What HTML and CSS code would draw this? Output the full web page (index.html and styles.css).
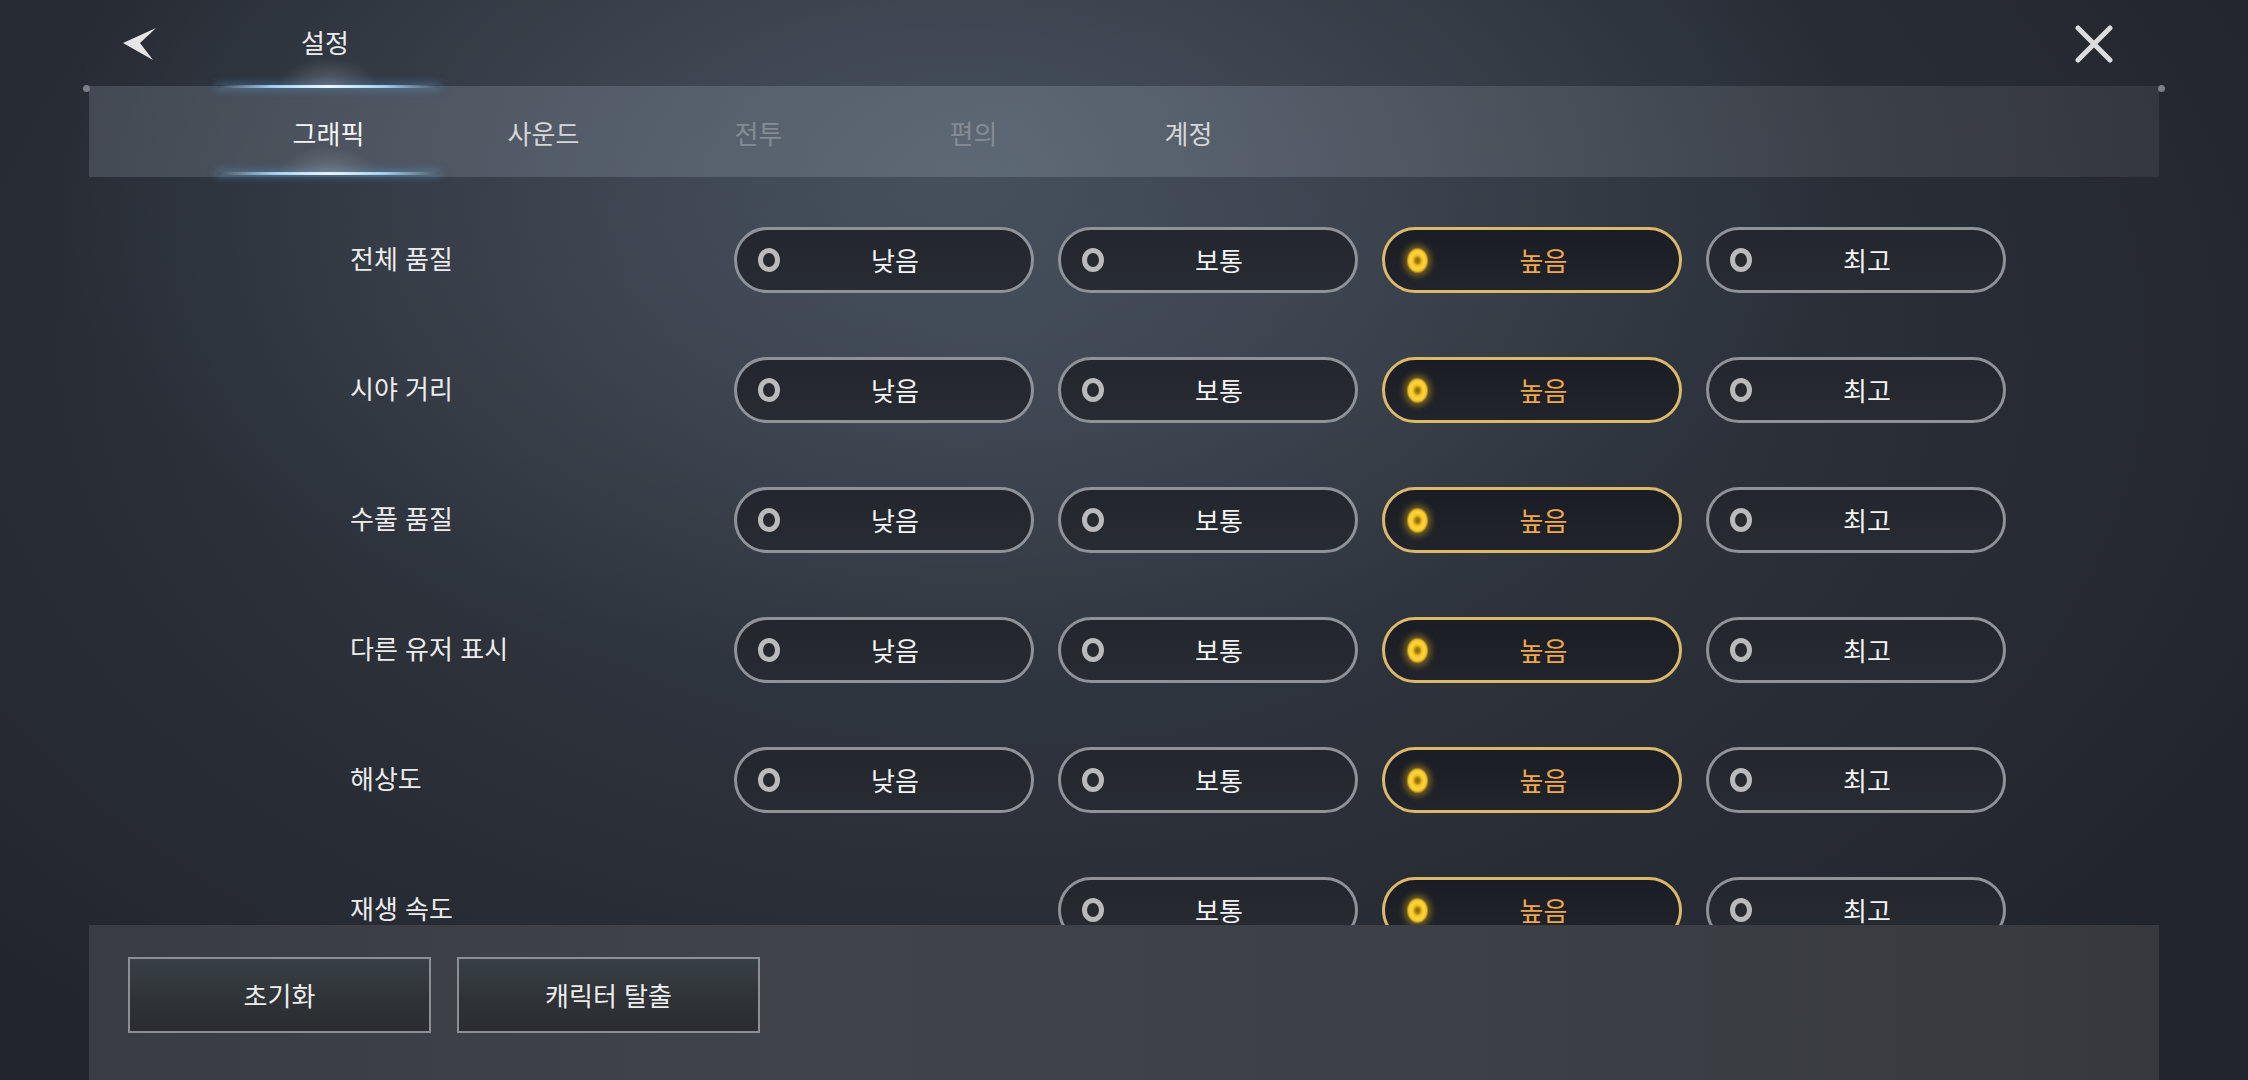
FILE: index.html
```html
<!DOCTYPE html>
<html lang="ko">
<head>
<meta charset="utf-8">
<title>설정</title>
<link rel="stylesheet" href="styles.css">
</head>
<body>
<div class="screen">
  <header class="header">
    <button class="back" aria-label="뒤로">
      <svg width="34" height="32" viewBox="0 0 34 32"><polygon points="0,15 33,0 17,15 30,32" fill="#e6e6e6"/></svg>
    </button>
    <h1 class="title">설정</h1>
    <div class="spacer"></div>
    <button class="close" aria-label="닫기">
      <svg width="38" height="38" viewBox="0 0 38 38"><path d="M3 3 L35 35 M35 3 L3 35" stroke="#dcdcdc" stroke-width="5" stroke-linecap="round"/></svg>
    </button>
  </header>

  <main class="panel">
    <nav class="tabs">
      <span class="dot dot-l"></span>
      <span class="dot dot-r"></span>
      <div class="tab active"><span>그래픽</span></div>
      <div class="tab"><span>사운드</span></div>
      <div class="tab dim"><span>전투</span></div>
      <div class="tab dim"><span>편의</span></div>
      <div class="tab"><span>계정</span></div>
    </nav>

    <section class="list">
      <div class="row">
        <div class="label">전체 품질</div>
        <div class="pill"><i class="radio"></i><span>낮음</span></div>
        <div class="pill"><i class="radio"></i><span>보통</span></div>
        <div class="pill on"><i class="radio"></i><span>높음</span></div>
        <div class="pill"><i class="radio"></i><span>최고</span></div>
      </div>
      <div class="row">
        <div class="label">시야 거리</div>
        <div class="pill"><i class="radio"></i><span>낮음</span></div>
        <div class="pill"><i class="radio"></i><span>보통</span></div>
        <div class="pill on"><i class="radio"></i><span>높음</span></div>
        <div class="pill"><i class="radio"></i><span>최고</span></div>
      </div>
      <div class="row">
        <div class="label">수풀 품질</div>
        <div class="pill"><i class="radio"></i><span>낮음</span></div>
        <div class="pill"><i class="radio"></i><span>보통</span></div>
        <div class="pill on"><i class="radio"></i><span>높음</span></div>
        <div class="pill"><i class="radio"></i><span>최고</span></div>
      </div>
      <div class="row">
        <div class="label">다른 유저 표시</div>
        <div class="pill"><i class="radio"></i><span>낮음</span></div>
        <div class="pill"><i class="radio"></i><span>보통</span></div>
        <div class="pill on"><i class="radio"></i><span>높음</span></div>
        <div class="pill"><i class="radio"></i><span>최고</span></div>
      </div>
      <div class="row">
        <div class="label">해상도</div>
        <div class="pill"><i class="radio"></i><span>낮음</span></div>
        <div class="pill"><i class="radio"></i><span>보통</span></div>
        <div class="pill on"><i class="radio"></i><span>높음</span></div>
        <div class="pill"><i class="radio"></i><span>최고</span></div>
      </div>
      <div class="row">
        <div class="label">재생 속도</div>
        <div class="pill col2"><i class="radio"></i><span>보통</span></div>
        <div class="pill on"><i class="radio"></i><span>높음</span></div>
        <div class="pill"><i class="radio"></i><span>최고</span></div>
      </div>
    </section>

    <footer class="footer">
      <button class="btn">초기화</button>
      <button class="btn">캐릭터 탈출</button>
    </footer>
  </main>
</div>
</body>
</html>
```

FILE: styles.css
```css
* { box-sizing: border-box; }

html, body {
  margin: 0;
  padding: 0;
  width: 2248px;
  height: 1080px;
  overflow: hidden;
}

body {
  font-family: "Noto Sans CJK KR", "Noto Sans", sans-serif;
  color: #e6e6e6;
  background:
    radial-gradient(ellipse 900px 520px at 950px 180px, rgba(78, 90, 104, 0.7), rgba(78, 90, 104, 0) 100%),
    radial-gradient(ellipse 1400px 900px at 1000px 350px, #363d47 0%, #2b3039 55%, #22252c 100%);
}

.screen {
  display: flex;
  flex-direction: column;
  height: 1080px;
}

/* ---------- header ---------- */
.header {
  height: 86px;
  display: flex;
  align-items: center;
  padding: 0 0 0 123px;
  flex: none;
}

.back, .close {
  background: none;
  border: 0;
  padding: 0;
  display: flex;
  align-items: center;
  justify-content: center;
  cursor: pointer;
}

.back { width: 34px; height: 32px; margin-top: 2px; }

.title {
  margin: -2px 0 0 144px;
  font-size: 26px;
  font-weight: 400;
  color: #ececec;
  line-height: 1;
}

.spacer { flex: 1; }

.close {
  width: 38px;
  height: 38px;
  margin-right: 135px;
  margin-top: 2px;
}

/* ---------- panel ---------- */
.panel {
  flex: 1;
  margin: 0 89px;
  display: flex;
  flex-direction: column;
  min-height: 0;
}

.tabs {
  position: relative;
  height: 91px;
  flex: none;
  display: flex;
  align-items: stretch;
  padding-left: 132px;
  background: linear-gradient(90deg, rgba(120, 128, 140, 0.34) 0%, rgba(140, 152, 166, 0.34) 45%, rgba(115, 120, 128, 0.28) 80%, rgba(100, 102, 108, 0.24) 100%);
}

.dot {
  position: absolute;
  top: -1px;
  width: 7px;
  height: 7px;
  border-radius: 50%;
  background: #7c7f84;
}
.dot-l { left: -6px; }
.dot-r { right: -6px; }

.tab {
  position: relative;
  width: 215px;
  display: flex;
  align-items: center;
  justify-content: center;
  font-size: 26px;
  line-height: 1;
  color: #d4d6d8;
  padding-top: 2px;
}

.tab.dim { color: #858b93; }

.tab.active { color: #f4f4f4; }

.tab.active::before,
.tab.active::after {
  content: "";
  position: absolute;
  left: -4px;
  right: -4px;
  height: 3px;
  background: linear-gradient(90deg, rgba(150, 210, 255, 0) 0%, rgba(170, 220, 255, 0.9) 25%, #eef8ff 50%, rgba(170, 220, 255, 0.9) 75%, rgba(150, 210, 255, 0) 100%);
  box-shadow: 0 0 8px 1px rgba(90, 170, 235, 0.5);
  border-radius: 2px;
}
.tab.active::before { top: -1px; }
.tab.active::after { bottom: 2px; }

/* soft glows near active tab lines */
.tabs::before {
  content: "";
  position: absolute;
  left: 184px;
  width: 110px;
  top: -32px;
  height: 32px;
  background: radial-gradient(ellipse 50px 28px at 50% 100%, rgba(205, 212, 222, 0.28), rgba(205, 212, 222, 0));
}
.tabs::after {
  content: "";
  position: absolute;
  left: 184px;
  width: 110px;
  bottom: 3px;
  height: 32px;
  background: radial-gradient(ellipse 50px 28px at 50% 100%, rgba(205, 212, 222, 0.24), rgba(205, 212, 222, 0));
}

/* ---------- list ---------- */
.list {
  flex: 1;
  min-height: 0;
  overflow: hidden;
  padding-top: 50px;
  display: flex;
  flex-direction: column;
  gap: 64px;
}

.row {
  display: grid;
  grid-template-columns: 360px 300px 300px 300px 300px;
  column-gap: 24px;
  padding-left: 261px;
  align-items: center;
  flex: none;
}

.label {
  font-size: 26px;
  line-height: 1;
  color: #ececec;
  margin-top: -4px;
}

.col2 { grid-column: 3; }

.pill {
  height: 66px;
  border: 3px solid #8f9296;
  border-radius: 33px;
  background: linear-gradient(180deg, #23262d 0%, #272b32 100%);
  display: flex;
  align-items: center;
  padding: 0 21px;
}

.pill span {
  flex: 1;
  text-align: center;
  font-size: 26px;
  line-height: 1;
  color: #f4f4f4;
}

.radio {
  width: 22px;
  height: 24px;
  border-radius: 50%;
  border: 5px solid #bababa;
  flex: none;
}

.pill.on {
  border-color: #dcb86a;
  background: linear-gradient(180deg, #1a1d23 0%, #21242b 100%);
}

.pill.on span { color: #f0a850; }

.pill.on .radio {
  border: 0;
  width: 23px;
  height: 27px;
  background: radial-gradient(ellipse 11px 13px at 50% 50%, #7d6418 0, #a98414 22%, #f0bf1c 40%, #ffd640 62%, #f4c226 82%, rgba(240, 190, 30, 0.35) 100%);
  box-shadow: 0 0 6px 2px rgba(230, 180, 30, 0.45);
}

/* ---------- footer ---------- */
.footer {
  height: 155px;
  flex: none;
  display: flex;
  align-items: flex-start;
  gap: 26px;
  padding: 32px 0 0 39px;
  background: linear-gradient(90deg, #393c43 0%, #40434a 35%, #3c3f45 70%, #37393e 100%);
}

.btn {
  width: 303px;
  height: 76px;
  border: 2px solid #8c8f93;
  background: linear-gradient(180deg, #384045 0%, #2f3337 55%, #2a2c31 100%);
  color: #eeeeee;
  font-family: "Noto Sans CJK KR", "Noto Sans", sans-serif;
  font-size: 26px;
  line-height: 1;
  padding: 0;
  cursor: pointer;
}
```
